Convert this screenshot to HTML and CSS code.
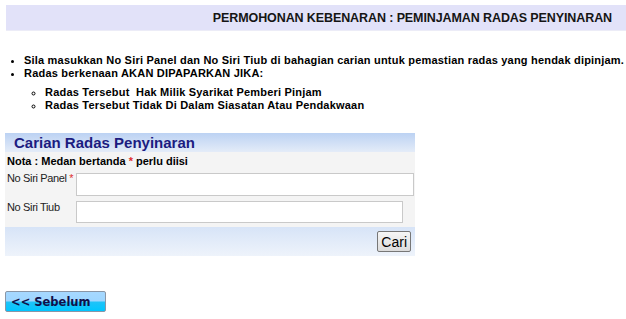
FILE: index.html
```html
<!DOCTYPE html>
<html>
<head>
<meta charset="utf-8">
<link rel="stylesheet" href="styles.css">
</head>
<body>
<div class="page">
  <div class="topbar"><span class="toptitle">PERMOHONAN KEBENARAN : PEMINJAMAN RADAS PENYINARAN</span></div>
  <ul class="info">
    <li>Sila masukkan No Siri Panel dan No Siri Tiub di bahagian carian untuk pemastian radas yang hendak dipinjam.</li>
    <li>Radas berkenaan AKAN DIPAPARKAN JIKA:
      <ul class="sub">
        <li>Radas Tersebut&nbsp; Hak Milik Syarikat Pemberi Pinjam</li>
        <li>Radas Tersebut Tidak Di Dalam Siasatan Atau Pendakwaan</li>
      </ul>
    </li>
  </ul>
  <div class="panel">
    <div class="panel-head">Carian Radas Penyinaran</div>
    <div class="panel-body">
      <div class="note">Nota : Medan bertanda <span class="req">*</span> perlu diisi</div>
      <div class="row row1">
        <label class="lbl">No Siri Panel <span class="req">*</span></label>
        <input class="inp inp1" type="text">
      </div>
      <div class="row row2">
        <label class="lbl">No Siri Tiub</label>
        <input class="inp inp2" type="text">
      </div>
    </div>
    <div class="panel-foot"><button class="cari">Cari</button></div>
  </div>
  <button class="back">&lt;&lt; Sebelum</button>
</div>
</body>
</html>
```
FILE: styles.css
```css
html, body { margin: 0; padding: 0; background: #fff; }
body { font-family: "Liberation Sans", Arial, sans-serif; color: #000; }
.page { padding: 5px 0 0 5px; }
.topbar {
  margin-left: 1px;
  height: 25px;
  background: #e2e2f9;
  border-bottom: 1px solid #ececf7;
  display: flex; align-items: center; justify-content: flex-end;
  padding-right: 14px;
}
.toptitle { font-size: 12.5px; font-weight: bold; color: #151515; letter-spacing: -0.1px; }
.info { list-style: disc; margin: 23px 0 0 0; padding-left: 19px; font-size: 11px; font-weight: bold; line-height: 13px; letter-spacing: 0.2px; }
.sub { list-style: circle; margin: 6px 0 0 0; padding-left: 21px; letter-spacing: 0.2px; }
.panel { width: 410px; margin-top: 21px; }
.panel-head {
  height: 19px; line-height: 19px;
  background: linear-gradient(#bcd2f3, #e4ecf8);
  color: #1c1c80; font-size: 15px; font-weight: bold; padding-left: 9px;
}
.panel-body { background: #f4f4f4; padding: 2px 0 4px 2px; }
.note { font-size: 11px; font-weight: bold; line-height: 14px; }
.req { color: #e03030; }
.row { display: flex; align-items: flex-start; }
.lbl { width: 69px; flex: none; white-space: nowrap; font-size: 11px; letter-spacing: -0.35px; color: #222; }
.row1 { margin-top: 5px; }
.row1 .lbl { line-height: 10px; }
.row2 { margin-top: 5px; }
.row2 .lbl { line-height: 12px; }
.inp { box-sizing: border-box; border: 1px solid #c9c9c9; background: #fff; margin: 0; padding: 0; }
.inp1 { width: 338px; height: 23px; }
.inp2 { width: 327px; height: 22px; }
.panel-foot {
  height: 29px; display: flex; justify-content: flex-end; align-items: center;
  background: linear-gradient(#d7e4f7, #eef3fb);
  padding-right: 4px;
}
.cari {
  font-family: "Liberation Sans", Arial, sans-serif; font-size: 14px;
  height: 21px; padding: 0 3px; border: 1px solid #777; border-radius: 2px;
  background: linear-gradient(#f6f6f6, #dcdcdc); color: #000;
}
.back {
  display: block; margin-top: 35px;
  width: 101px; height: 21px;
  border: 1px solid #8a96a6; border-radius: 2px;
  background: linear-gradient(#a6d8ff 0%, #9fd6ff 45%, #1ec3f8 55%, #00c6ff 100%);
  font-family: "DejaVu Sans", Verdana, sans-serif; font-size: 11.5px; font-weight: bold; color: #10104a;
  text-align: left; padding: 0 0 0 5px;
}
```
